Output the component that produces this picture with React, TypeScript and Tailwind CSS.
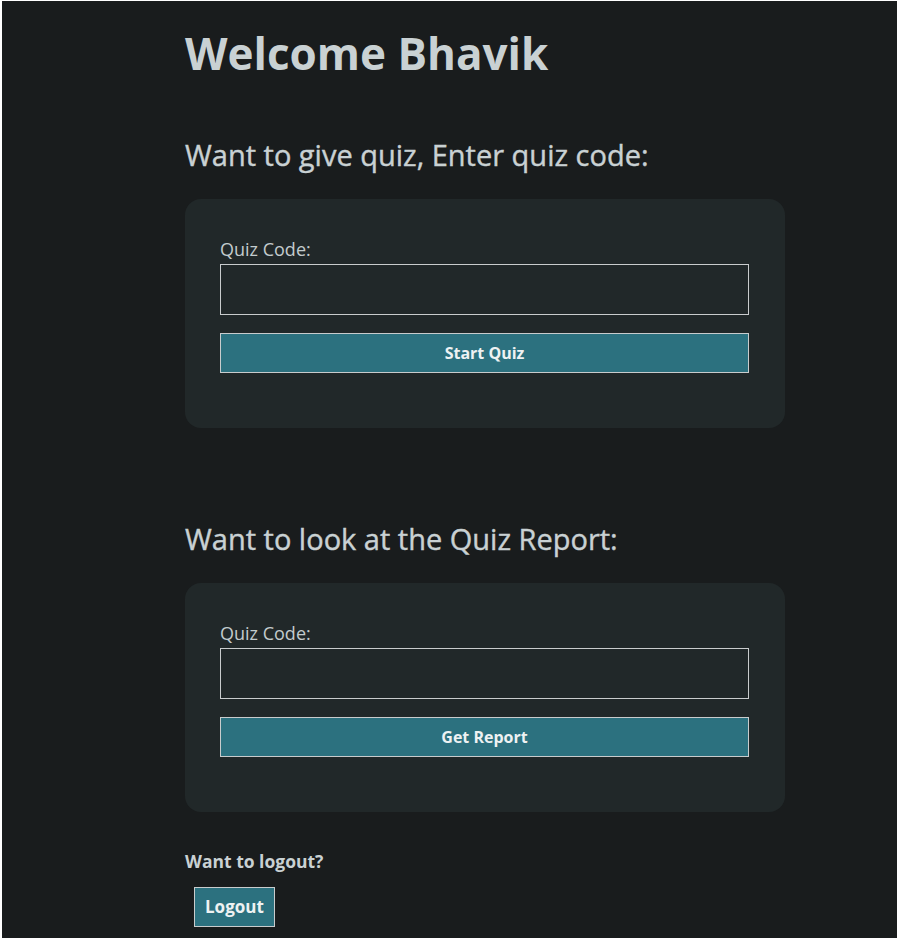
import React from "react";

function Card({ button }: { button: string }) {
  return (
    <div className="w-[600px] rounded-[16px] bg-[#212829] pl-[35px] pr-[36px] pt-[38px] pb-[55px]">
      <label className="block text-[18px] leading-[24px] text-[#c3cbcd]">Quiz Code:</label>
      <input className="mt-[3px] block h-[51px] w-[529px] border border-[#c9cccd] bg-[#212829] outline-none" />
      <button className="mt-[18px] block h-[40px] w-[529px] border border-[#c9cccd] bg-[#2c717f] text-[16px] font-bold text-[#eef2f3]">
        {button}
      </button>
    </div>
  );
}

export default function App() {
  return (
    <div
      className="min-h-[939px] w-[899px] border-x-2 border-y border-white bg-[#191c1d] text-[#c9d1d3]"
      style={{ fontFamily: '"Open Sans", "Noto Sans", sans-serif' }}
    >
      <div className="ml-[183px] w-[600px] pt-[22px]">
        <h1 className="text-[44px] font-bold leading-[60px]">Welcome Bhavik</h1>
        <h2 className="mt-[52px] text-[29px] leading-[40px] [-webkit-text-stroke:0.4px_#c9d1d3]">Want to give quiz, Enter quiz code:</h2>
        <div className="mt-[24px]">
          <Card button="Start Quiz" />
        </div>
        <h2 className="mt-[91px] text-[29px] leading-[40px] [-webkit-text-stroke:0.4px_#c9d1d3]">Want to look at the Quiz Report:</h2>
        <div className="mt-[24px]">
          <Card button="Get Report" />
        </div>
        <p className="mt-[37px] text-[17.5px] font-bold leading-[24px]">Want to logout?</p>
        <button className="ml-[9px] mt-[14px] h-[40px] border border-[#c9cccd] bg-[#2c717f] px-[10px] text-[17px] font-bold text-[#eef2f3]">
          Logout
        </button>
      </div>
    </div>
  );
}
